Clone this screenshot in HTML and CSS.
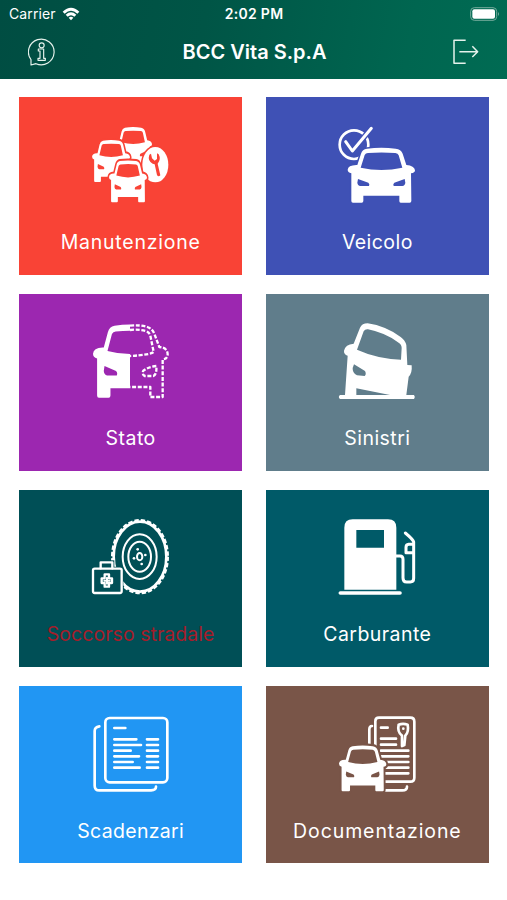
FILE: index.html
```html
<!DOCTYPE html>
<html lang="it">
<head>
  <meta charset="UTF-8" />
  <meta name="viewport" content="width=device-width, initial-scale=1.0" />
  <title>BCC Vita S.p.A</title>
  <link rel="stylesheet" href="styles.css">
</head>
<body>

<!-- Shared car shapes -->
<svg class="defs" width="0" height="0">
  <defs>
    <path id="carOutline" d="M95 150L106 116Q110 103 124 101Q167 96 210 101Q226 103 231 116L242 150Q266 152 268 166Q268 174 256 175L257 258Q257 263 252 263H225Q221 263 221 258V242H113V258Q113 263 108 263H82Q77 263 77 258V175Q66 172 66 164Q67 151 92 150Z"/>
    <path id="car" fill-rule="evenodd" d="M95 150L106 116Q110 103 124 101Q167 96 210 101Q226 103 231 116L242 150Q266 152 268 166Q268 174 256 175L257 258Q257 263 252 263H225Q221 263 221 258V242H113V258Q113 263 108 263H82Q77 263 77 258V175Q66 172 66 164Q67 151 92 150Z M105 158Q167 172 230 158L219 121Q217 115 209 114Q167 111 127 114Q120 114 117 120Z M97 192L128 203Q133 207 130 213H104Q96 212 95 203Z M237 192L206 203Q201 207 204 213H230Q238 212 239 203Z"/>
    <clipPath id="leftHalf"><rect x="0" y="0" width="151" height="300"/></clipPath>
  </defs>
</svg>

<header class="header">
  <div class="status-bar">
    <div class="carrier">
      <span>Carrier</span>
      <svg class="wifi" viewBox="0 0 54 42">
        <path d="M2 14Q27-9 52 14L46 20Q27 2 8 20Z"/>
        <path d="M11 23Q27 9 43 23L37 29Q27 20 17 29Z"/>
        <path d="M20 32Q27 26 34 32L27 40Z"/>
      </svg>
    </div>
    <div class="clock">2:02 PM</div>
    <div class="battery">
      <svg viewBox="0 0 90 42">
        <rect class="battery-case" x="2" y="2" width="78" height="38" rx="11"/>
        <rect x="7" y="7" width="68" height="28" rx="6"/>
        <path class="battery-tip" d="M84 15Q90 21 84 27Z"/>
      </svg>
    </div>
  </div>
  <div class="nav-bar">
    <svg class="nav-icon info" viewBox="0 0 84 84">
      <path d="M9 65A38.500 38.500 0 1 1 24 77L9 81Z"/>
      <circle cx="41" cy="22" r="7.500"/>
      <path d="M31 33H47V61H52V67H30V61H36V39H31Z"/>
    </svg>
    <h1 class="title">BCC Vita S.p.A</h1>
    <svg class="nav-icon logout" viewBox="0 0 78 78">
      <path d="M38 4H3V73H38M19 38H74M58 22L74 38L58 54"/>
    </svg>
  </div>
</header>

<main class="menu-grid">
  <div class="card maintenance">
    <svg class="icon" viewBox="4 0 300 300">
      <use href="#car" transform="translate(66 -39) scale(.564 .764)"/>
      <use href="#carOutline" class="halo" transform="scale(.564 .764)"/>
      <use href="#car" transform="scale(.564 .764)"/>
      <ellipse class="halo small" cx="227" cy="149" rx="39" ry="53"/>
      <ellipse cx="227" cy="149" rx="39" ry="53"/>
      <use href="#carOutline" class="halo" transform="translate(50.8 61.1) scale(.564 .764)"/>
      <use href="#car" transform="translate(50.8 61.1) scale(.564 .764)"/>
      <path class="wrench" d="M209 119Q203 137 219 146L225 148L232 180Q236 187 242 181L234 146Q245 133 237 118L232 115L232 132L225 137L217 130L214 116Z"/>
    </svg>
    <span class="label">Manutenzione</span>
  </div>

  <div class="card vehicle">
    <svg class="icon" viewBox="4 0 300 300">
      <circle class="line" cx="85" cy="89" r="43"/>
      <path class="gap" d="M94 91L137 40"/>
      <path class="line check" d="M60 80L80 108L137 40"/>
      <use href="#carOutline" class="halo small"/>
      <use href="#car"/>
    </svg>
    <span class="label">Veicolo</span>
  </div>

  <div class="card state">
    <svg class="icon" viewBox="4 0 300 300">
      <g clip-path="url(#leftHalf)">
        <use href="#car" transform="translate(-33.5 -90.7) scale(1.114 1.333)"/>
      </g>
      <path class="line dashed" d="M151 44Q181 41 203 48Q218 53 224 68L239 108Q264 110 264 131Q263 144 249 145V258H212V228H151"/>
      <path class="line dashed" d="M151 57Q176 54 198 60Q209 64 212 74L222 123Q215 131 151 135"/>
      <path class="line dashed" d="M230 165Q207 167 191 179Q186 189 195 195H221Q232 190 230 165Z"/>
    </svg>
    <span class="label">Stato</span>
  </div>

  <div class="card accident">
    <svg class="icon" viewBox="4 0 300 300">
      <path fill-rule="evenodd" d="M84 98L103 50Q109 37 126 37Q180 45 225 78Q238 87 242 102L245 162L258 163Q260 187 249 197L242 252H265Q270 258 265 264H43Q36 258 43 252H58L66 134Q54 130 55 119Q59 100 84 98Z M94 116Q154 143 226 146L228 111Q228 100 219 95Q178 65 127 55Q118 54 114 61Z M85 160L118 180Q123 190 117 195L94 193Q80 187 81 171Z M92 232V252H193Z"/>
    </svg>
    <span class="label">Sinistri</span>
  </div>

  <div class="card roadside">
    <svg class="icon" viewBox="4 0 300 300">
      <ellipse class="line tyre" cx="181" cy="149" rx="79" ry="105"/>
      <ellipse class="line tread" cx="181" cy="149" rx="83" ry="109"/>
      <ellipse class="line rim" cx="180" cy="149" rx="51" ry="67"/>
      <ellipse class="line rim" cx="180" cy="149" rx="34" ry="45"/>
      <ellipse class="line rim" cx="180" cy="149" rx="8" ry="11"/>
      <circle cx="174" cy="127" r="4"/><circle cx="197" cy="144" r="4"/>
      <circle cx="163" cy="154" r="4"/><circle cx="186" cy="171" r="4"/>
      <rect class="bag-bg" x="34" y="179" width="97" height="85" rx="8"/>
      <path class="bag-bg" d="M57 160H104V190H57Z"/>
      <rect class="line bag" x="40" y="185" width="86" height="73" rx="5"/>
      <path class="line bag" d="M63 184V166H98V184"/>
      <path class="line bag" d="M75 202H88V214H97V228H88V239H75V228H66V214H75Z"/>
      <path class="line rim" d="M82 212V230M74 221H90"/>
    </svg>
    <span class="label alert">Soccorso stradale</span>
  </div>

  <div class="card fuel">
    <svg class="icon" viewBox="4 0 300 300">
      <path fill-rule="evenodd" d="M56 248V62Q56 37 81 37H187Q212 37 212 62V248ZM92 69V122H175V69Z"/>
      <path class="line base" d="M44 258H223"/>
      <path class="line hose" d="M210 147H223Q232 147 232 157V213Q232 225 243 225H254Q264 225 264 214V105Q263 98 239 78M264 112H249Q241 113 241 121V137H264"/>
    </svg>
    <span class="label">Carburante</span>
  </div>

  <div class="card deadlines">
    <svg class="icon" viewBox="4 0 300 300">
      <rect class="line" x="77" y="42" width="186" height="193" rx="13"/>
      <path class="line" d="M59 67Q45 69 45 81V245Q45 259 59 259H214Q229 258 229 248"/>
      <path class="line" d="M104 72H137M104 106H170M104 123H184M104 140H153M104 157H178M104 174H159M104 191H180M202 106H235M202 123H235M202 140H235M202 157H235M202 174H235M202 191H235"/>
    </svg>
    <span class="label">Scadenzari</span>
  </div>

  <div class="card documents">
    <svg class="icon" viewBox="4 0 300 300">
      <path class="line" d="M149 125V52Q149 41 160 41H254Q266 41 266 53V221Q266 233 254 233H178M139 66Q131 66 131 76V121M178 259H230Q244 259 244 248"/>
      <path class="line" d="M166 71H186M166 104H211M166 122H211M166 140H248M166 157H248M177 174H248M183 191H248M178 208H248"/>
      <path class="line" d="M219 62Q232 57 246 62Q250 83 239 95L236 123L229 126V95Q214 84 219 62Z"/>
      <circle cx="233" cy="74" r="4"/>
      <use href="#carOutline" class="halo" transform="translate(-6.4 42) scale(.703 .836)"/>
      <use href="#car" transform="translate(-6.4 42) scale(.703 .836)"/>
    </svg>
    <span class="label">Documentazione</span>
  </div>
</main>

</body>
</html>
```
FILE: styles.css
```css
* {
  box-sizing: border-box;
}

body {
  margin: 0;
  background-color: #ffffff;
  color: #ffffff;
  font-family: Inter, sans-serif;
}

.defs {
  display: block;
}

/* Header */
.header {
  height: 79px;
  background: linear-gradient(100deg, #004d42 0%, #005546 40%, #006650 80%, #006b53 100%);
}

.status-bar {
  display: grid;
  grid-template-columns: 1fr auto 1fr;
  align-items: center;
  height: 27px;
  padding: 0 7px 0 9px;
  font-size: 14px;
}

.carrier {
  display: flex;
  align-items: center;
  gap: 6px;
  letter-spacing: 0.1px;
}

.wifi {
  width: 18px;
  height: 14px;
  fill: #ffffff;
}

.clock {
  margin-right: 1px;
  font-weight: 600;
  font-size: 14px;
  letter-spacing: 0.3px;
}

.battery {
  display: flex;
  justify-content: flex-end;
}

.battery svg {
  width: 30px;
  height: 14px;
  fill: #ffffff;
}

.battery .battery-case {
  fill: none;
  stroke: #73aa9b;
  stroke-width: 3;
}

.battery .battery-tip {
  fill: #73aa9b;
}

.nav-bar {
  display: flex;
  align-items: center;
  justify-content: space-between;
  height: 50px;
  padding: 0 28px;
}

.nav-icon {
  width: 28px;
  height: 28px;
  fill: none;
  stroke: #e5f2ec;
  stroke-width: 3.5;
  stroke-linejoin: round;
}

.nav-icon.logout {
  width: 26px;
  height: 26px;
  stroke-width: 4.5;
}

.title {
  margin: 0;
  font-size: 20px;
  font-weight: 600;
}

/* Menu */
.menu-grid {
  display: grid;
  grid-template-columns: 1fr 1fr;
  grid-auto-rows: 177.4px;
  gap: 18.8px 24px;
  padding: 18.4px 18.3px 0 19.3px;
}

.card {
  --tile: #f94336;
  display: flex;
  flex-direction: column;
  align-items: center;
  padding-top: 17.6px;
  background-color: var(--tile);
}

.card.vehicle { --tile: #3f51b5; }
.card.state { --tile: #9c27b0; }
.card.accident { --tile: #607d8b; }
.card.roadside { --tile: #004f56; }
.card.fuel { --tile: #005a68; }
.card.deadlines { --tile: #2196f3; }
.card.documents { --tile: #795548; }

.label {
  margin-top: 15px;
  font-size: 19.5px;
  line-height: 24px;
  letter-spacing: 0.45px;
  white-space: nowrap;
}

.maintenance .label { letter-spacing: 0.75px; }
.documents .label { letter-spacing: 0.9px; }
.deadlines .label { letter-spacing: 0.3px; }

.label.alert {
  color: #a51d2a;
  letter-spacing: 0.05px;
}

/* Icons */
.icon {
  flex-shrink: 0;
  width: 100px;
  height: 100px;
  fill: #ffffff;
}

.line {
  fill: none;
  stroke: #ffffff;
  stroke-width: 8;
  stroke-linecap: round;
  stroke-linejoin: round;
}

.halo {
  fill: var(--tile);
  stroke: var(--tile);
  stroke-width: 16;
}

.halo.small {
  stroke-width: 9;
}

.gap {
  stroke: var(--tile);
  stroke-width: 17;
}

.check {
  stroke-width: 9;
}

.wrench,
.bag-bg {
  fill: var(--tile);
}

.dashed {
  stroke-width: 7;
  stroke-linecap: butt;
  stroke-dasharray: 12 5;
}

.tyre {
  stroke-width: 8;
}

.rim {
  stroke-width: 6;
}

.bag {
  stroke-width: 7;
}

.tread {
  stroke-width: 8;
  stroke-linecap: butt;
  stroke-dasharray: 13 6;
}

.base {
  stroke-width: 11;
}

.hose {
  stroke-width: 9;
}
```
